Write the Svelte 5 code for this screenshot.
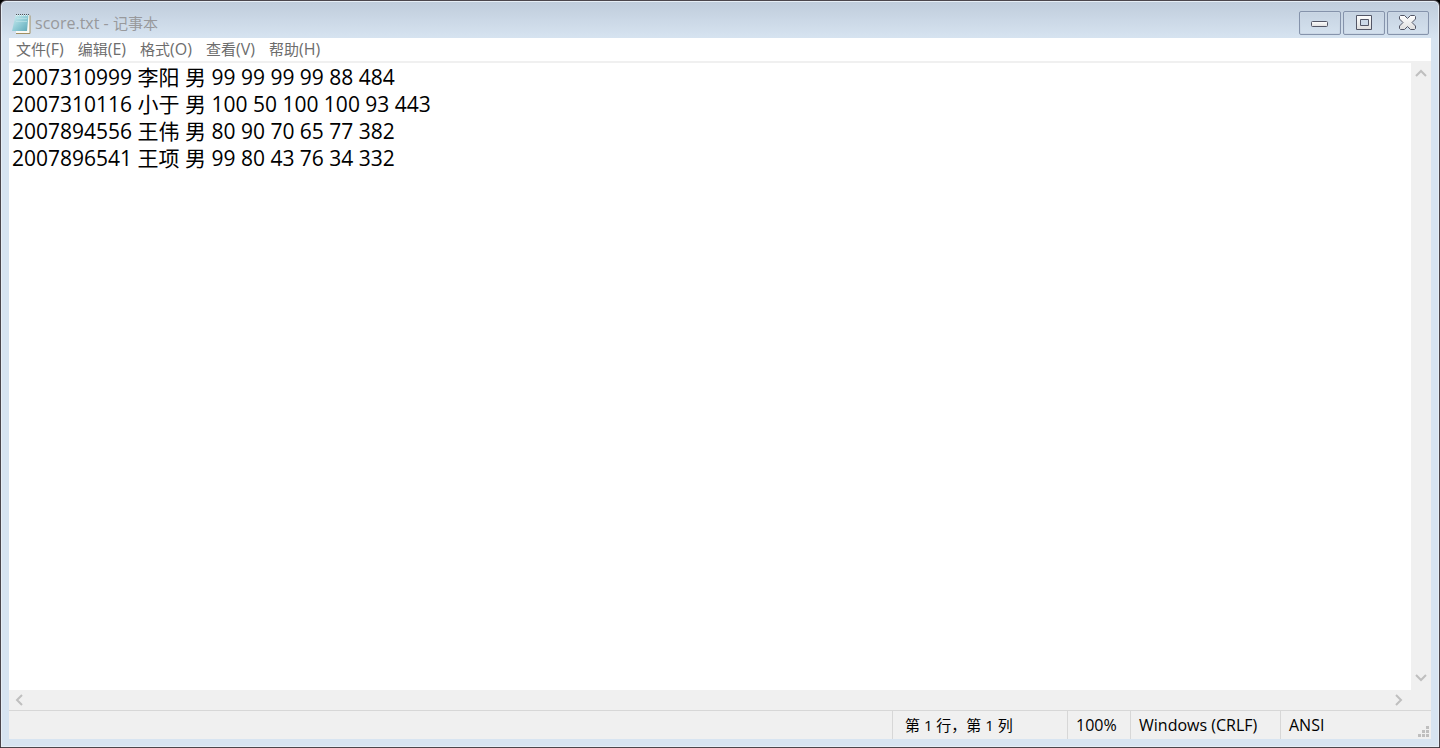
<script>
  const menus = [
    ['文件', '(F)'],
    ['编辑', '(E)'],
    ['格式', '(O)'],
    ['查看', '(V)'],
    ['帮助', '(H)']
  ];
  let text = $state(
    [
      '2007310999 李阳 男 99 99 99 99 88 484',
      '2007310116 小于 男 100 50 100 100 93 443',
      '2007894556 王伟 男 80 90 70 65 77 382',
      '2007896541 王项 男 99 80 43 76 34 332'
    ].join('\n')
  );
</script>

<div class="desktop">
  <main class="window">
    <header class="titlebar">
      <svg class="app-icon" width="20" height="22" viewBox="0 0 20 22" aria-hidden="true">
        <defs>
          <linearGradient id="pad" x1="0" y1="0" x2="1" y2="1">
            <stop offset="0" stop-color="#d3eff2" />
            <stop offset="0.5" stop-color="#93cdd7" />
            <stop offset="1" stop-color="#5fa9b8" />
          </linearGradient>
        </defs>
        <path d="M4 3H18V20H4Z" fill="#fbfaf5" />
        <path d="M18 2.500V20.500H4" fill="none" stroke="#a08f62" />
        <path d="M3.500 2H16.500L15 18H0Z" fill="url(#pad)" />
        <path d="M5 5.500h10M4 8.500h11" stroke="#c4e8ec" stroke-width="1" opacity="0.600" />
        <path d="M4 1.500H17" stroke="#4b5357" stroke-width="1" stroke-dasharray="1 1" />
        <path d="M4 2.500H17" stroke="#e8f4f5" stroke-width="1" stroke-dasharray="1 1" />
      </svg>
      <h1>score.txt - <span class="han">记事本</span></h1>
      <div class="controls">
        <button aria-label="最小化">
          <svg width="20" height="20" viewBox="0 0 20 20">
            <defs>
              <linearGradient id="metal" x1="0" y1="0" x2="0" y2="1">
                <stop offset="0" stop-color="#ffffff" />
                <stop offset="1" stop-color="#dedede" />
              </linearGradient>
            </defs>
            <rect x="1.500" y="8.500" width="16" height="5" rx="1" fill="url(#metal)" stroke="#535666" />
          </svg>
        </button>
        <button aria-label="最大化">
          <svg width="20" height="20" viewBox="0 0 20 20"><path fill-rule="evenodd" d="M2.500 2.500H17.500V16.500H2.500ZM6.500 6.500V12.500H14.500V6.500Z" fill="url(#metal)" stroke="#535666" stroke-linejoin="round" /></svg>
        </button>
        <button aria-label="关闭">
          <svg width="20" height="20" viewBox="0 0 20 20"><path d="M2.500 2.500H6.500L9.500 5.500L12.500 2.500H16.500L17.500 3.500V6L14 9.500L17.500 13V15.500L16.500 16.500H12.500L9.500 13.500L6.500 16.500H2.500L1.500 15.500V13L5 9.500L1.500 6V3.500Z" fill="url(#metal)" stroke="#535666" stroke-linejoin="round" /></svg>
        </button>
      </div>
    </header>

    <nav class="menubar">
      {#each menus as [label, key]}
        <button><span class="han">{label}</span>{key}</button>
      {/each}
    </nav>

    <section class="editor">
      <textarea aria-label="文本编辑器" wrap="off" spellcheck="false" bind:value={text}></textarea>
      <div class="vscroll">
        <button aria-label="向上滚动"><svg width="12" height="8" viewBox="0 0 12 8"><path d="M1 7L6 2L11 7" /></svg></button>
        <button aria-label="向下滚动"><svg width="12" height="8" viewBox="0 0 12 8"><path d="M1 1L6 6L11 1" /></svg></button>
      </div>
      <div class="hscroll">
        <button aria-label="向左滚动"><svg width="8" height="12" viewBox="0 0 8 12"><path d="M7 1L2 6L7 11" /></svg></button>
        <button aria-label="向右滚动"><svg width="8" height="12" viewBox="0 0 8 12"><path d="M1 1L6 6L1 11" /></svg></button>
      </div>
    </section>

    <footer class="statusbar">
      <span class="cell position">第 1 行，第 1 列</span>
      <span class="cell zoom">100%</span>
      <span class="cell ending">Windows (CRLF)</span>
      <span class="cell encoding">ANSI</span>
      <svg class="grip" width="11" height="11" viewBox="0 0 11 11" aria-hidden="true">
        <path d="M8 0h3v3h-3zM4 4h3v3h-3zM8 4h3v3h-3zM0 8h3v3h-3zM4 8h3v3h-3zM8 8h3v3h-3z" fill="#bfbfbf" />
      </svg>
    </footer>
  </main>
</div>

<style>
  :global(body) {
    background: #000;
  }

  .desktop {
    display: flex;
    min-height: 100vh;
    font-family: 'Open Sans', 'Noto Sans CJK SC', sans-serif;
    font-size: 16px;
  }

  .window {
    box-sizing: border-box;
    flex: 1;
    min-width: 0;
    display: flex;
    flex-direction: column;
    padding: 0 8px 8px;
    border: 1px solid #4b464c;
    border-radius: 6px 6px 0 0;
    background: linear-gradient(#bfccdb, #d7e4f1 38px);
    box-shadow: inset 0 0 0 1px #e6eef6;
  }

  button {
    padding: 0;
    border: 0;
    background: none;
    font: inherit;
    color: inherit;
  }

  svg {
    display: block;
  }

  .han {
    font-size: 15px;
  }

  .titlebar {
    display: flex;
    align-items: center;
    height: 37px;
    padding: 0 2px 0 3px;
  }

  .app-icon {
    margin-top: 8px;
  }

  h1 {
    flex: 1;
    margin: 6px 0 0 3px;
    font-size: 16px;
    line-height: 20px;
    font-weight: 400;
    color: #98999c;
  }

  .controls {
    display: flex;
    gap: 2px;
    margin-top: 7px;
  }

  .controls button {
    display: grid;
    place-items: center;
    width: 42px;
    height: 24px;
    border: 1px solid #8593ab;
    border-radius: 2px;
    box-shadow: inset 0 0 0 1px #cbd7e5;
  }

  .menubar {
    display: flex;
    gap: 14px;
    height: 23px;
    padding: 0 7px;
    background: #fff;
    color: #6d6d6d;
    line-height: 23px;
  }

  .editor {
    flex: 1;
    display: grid;
    grid-template: 1fr 20px / 1fr 20px;
    border-top: 2px solid #f0f0f0;
    background: #f0f0f0;
  }

  textarea {
    display: block;
    min-width: 0;
    margin: 0;
    padding: 1px 3px;
    border: 0;
    outline: 0;
    resize: none;
    overflow: hidden;
    background: #fff;
    color: #000;
    font-family: inherit;
    font-size: 21px;
    line-height: 27px;
  }

  .vscroll,
  .hscroll {
    display: flex;
    justify-content: space-between;
  }

  .vscroll {
    flex-direction: column;
    padding-bottom: 2px;
  }

  .hscroll {
    padding-right: 2px;
  }

  .vscroll button,
  .hscroll button {
    display: grid;
    place-items: center;
    width: 20px;
    height: 20px;
  }

  .vscroll path,
  .hscroll path {
    fill: none;
    stroke: #bfbfbf;
    stroke-width: 2;
  }

  .statusbar {
    display: flex;
    justify-content: flex-end;
    height: 28px;
    border-top: 1px solid #d7d7d7;
    background: #f0f0f0;
    color: #000;
    line-height: 28px;
    position: relative;
  }

  .cell {
    box-sizing: border-box;
    padding-left: 8px;
    border-left: 1px solid #d7d7d7;
    white-space: nowrap;
  }

  .position {
    width: 175px;
    padding-left: 12px;
    font-size: 15px;
  }

  .zoom {
    width: 63px;
  }

  .ending {
    width: 150px;
  }

  .encoding {
    width: 151px;
  }

  .grip {
    position: absolute;
    right: 2px;
    bottom: 2px;
  }
</style>
